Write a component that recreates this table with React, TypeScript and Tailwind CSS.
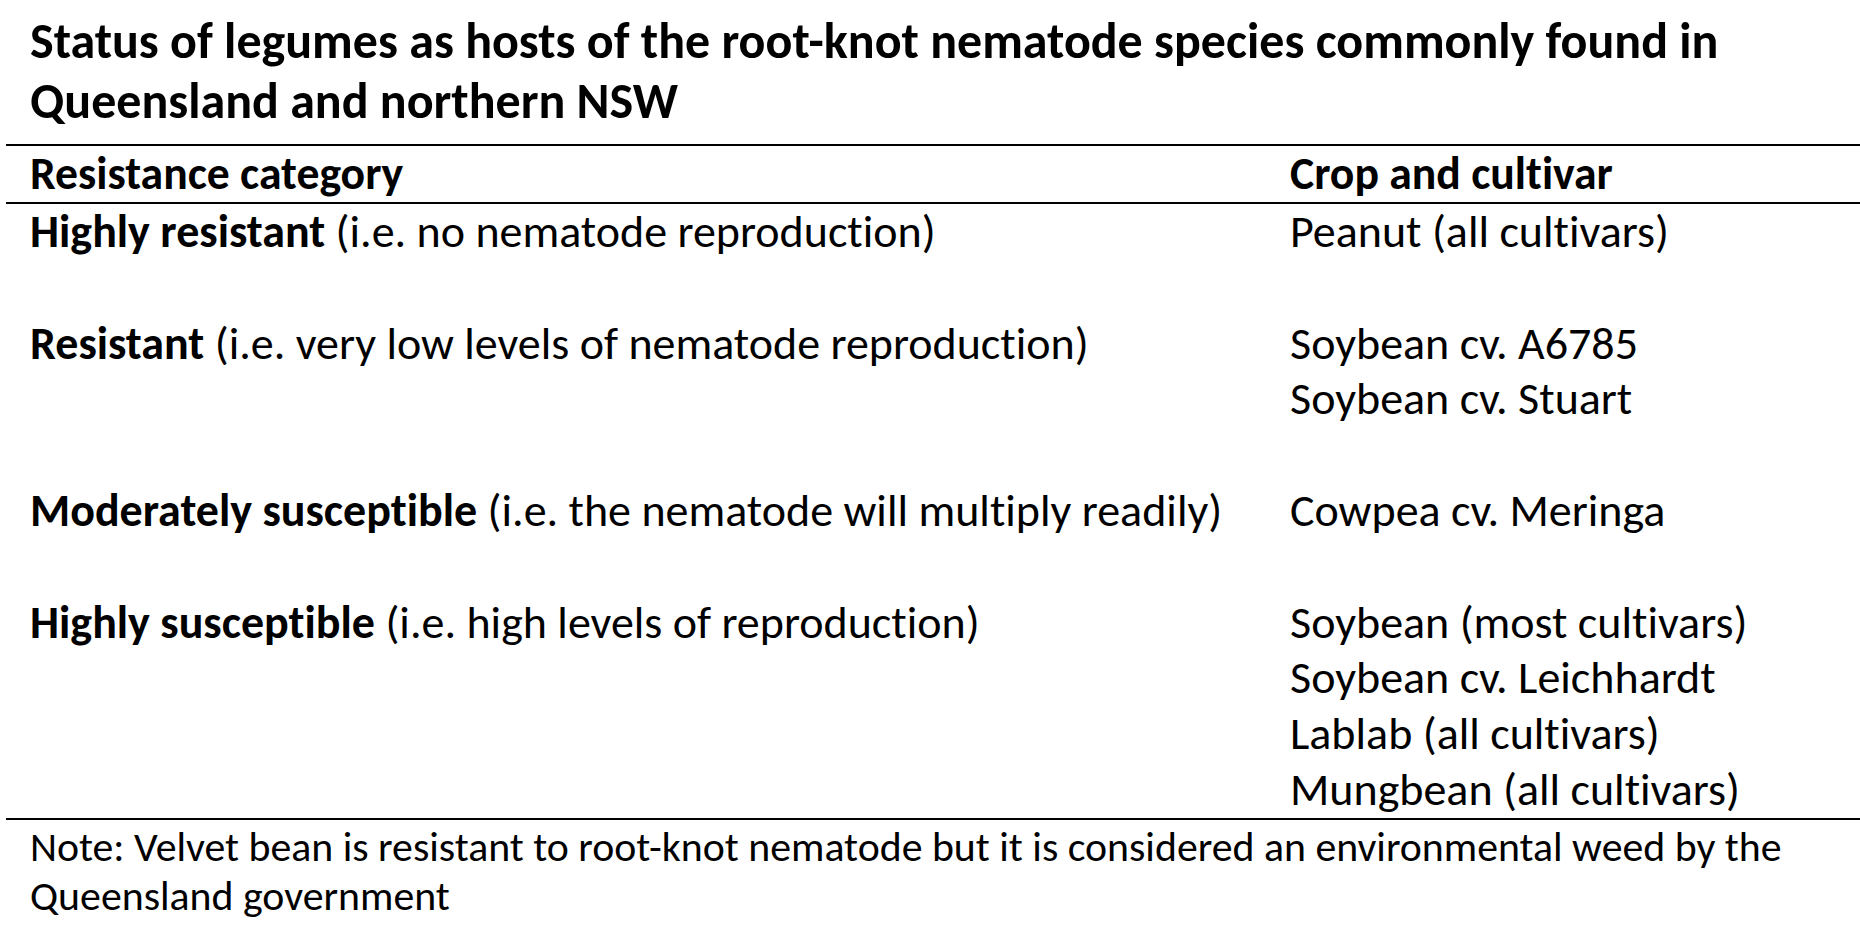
import React from "react";

const rows: { bold: string; rest: string; crops: string[]; blankAfter: boolean }[] = [
  { bold: "Highly resistant", rest: " (i.e. no nematode reproduction)", crops: ["Peanut (all cultivars)"], blankAfter: true },
  { bold: "Resistant", rest: " (i.e. very low levels of nematode reproduction)", crops: ["Soybean cv. A6785", "Soybean cv. Stuart"], blankAfter: true },
  { bold: "Moderately susceptible", rest: " (i.e. the nematode will multiply readily)", crops: ["Cowpea cv. Meringa"], blankAfter: true },
  {
    bold: "Highly susceptible",
    rest: " (i.e. high levels of reproduction)",
    crops: ["Soybean (most cultivars)", "Soybean cv. Leichhardt", "Lablab (all cultivars)", "Mungbean (all cultivars)"],
    blankAfter: false,
  },
];

export default function App() {
  return (
    <div className="w-[1860px] h-[940px] bg-white text-black font-['Carlito','Lato',sans-serif] [font-variant-ligatures:none]">
      <div className="pt-[11px] pl-[30px] pb-[14px] text-[50px] leading-[59.5px] font-bold">
        Status of legumes as hosts of the root-knot nematode species commonly found in
        <br />
        Queensland and northern NSW
      </div>
      <div className="ml-[6px] h-[2px] bg-black" />
      <div className="grid grid-cols-[1260px_1fr] pl-[30px] h-[56px] items-center text-[45.7px] leading-[55.8px] font-bold">
        <div>Resistance category</div>
        <div>Crop and cultivar</div>
      </div>
      <div className="ml-[6px] h-[2px] bg-black" />
      <div className="flex flex-col pl-[30px] text-[46px] leading-[55.8px]">
        {rows.map((r) => (
          <div key={r.bold} className="grid grid-cols-[1260px_1fr]">
            <div>
              <span className="font-bold">{r.bold}</span>
              {r.rest}
            </div>
            <div className="flex flex-col">
              {r.crops.map((c) => (
                <div key={c}>{c}</div>
              ))}
              {r.blankAfter && <div className="h-[55.8px]" />}
            </div>
          </div>
        ))}
      </div>
      <div className="ml-[6px] h-[2px] bg-black" />
      <div className="pl-[30px] pt-[2px] text-[41.8px] leading-[49px]">
        Note: Velvet bean is resistant to root-knot nematode but it is considered an environmental weed by the
        <br />
        Queensland government
      </div>
    </div>
  );
}
